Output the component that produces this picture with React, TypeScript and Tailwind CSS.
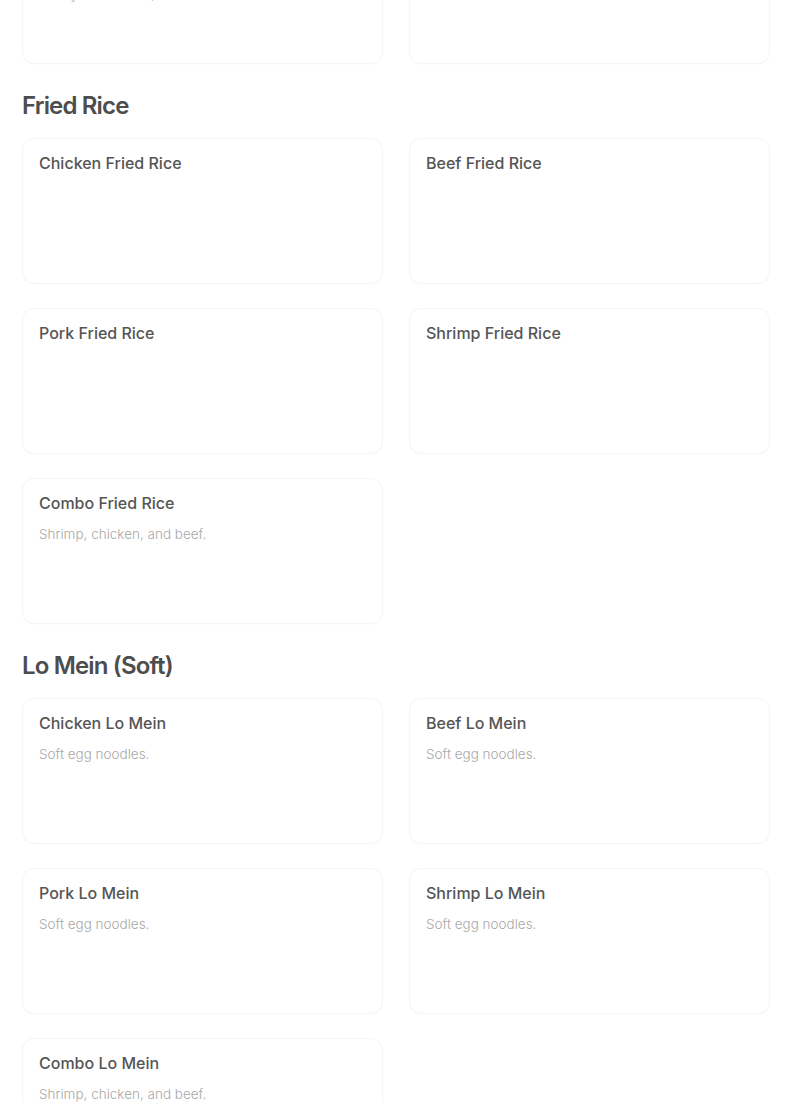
import React from 'react';

interface MenuItem {
  name: string;
  description?: string;
}

interface MenuSection {
  title?: string;
  items: MenuItem[];
}

const sections: MenuSection[] = [
  {
    items: [
      { name: 'Combo Chow Mein', description: 'Crispy pan-fried noodles tossed with cabbage, celery and onions, in brown sauce.' },
      { name: 'Vegetable Chow Mein' },
    ],
  },
  {
    title: 'Fried Rice',
    items: [
      { name: 'Chicken Fried Rice' },
      { name: 'Beef Fried Rice' },
      { name: 'Pork Fried Rice' },
      { name: 'Shrimp Fried Rice' },
      { name: 'Combo Fried Rice', description: 'Shrimp, chicken, and beef.' },
    ],
  },
  {
    title: 'Lo Mein (Soft)',
    items: [
      { name: 'Chicken Lo Mein', description: 'Soft egg noodles.' },
      { name: 'Beef Lo Mein', description: 'Soft egg noodles.' },
      { name: 'Pork Lo Mein', description: 'Soft egg noodles.' },
      { name: 'Shrimp Lo Mein', description: 'Soft egg noodles.' },
      { name: 'Combo Lo Mein', description: 'Shrimp, chicken, and beef.' },
    ],
  },
];

function ItemCard({ item }: { item: MenuItem }) {
  return (
    <div className="h-[146px] bg-white border border-[#f5f5f5] rounded-xl px-4 pt-3 shadow-[0_1px_2px_rgba(0,0,0,0.015)]">
      <h3 className="text-base leading-6 font-medium text-[#555555] font-['Inter',sans-serif]">{item.name}</h3>
      {item.description && (
        <p className="mt-[9px] text-[13.5px] leading-5 font-light text-[#a8a8a8] font-['Inter',sans-serif]">{item.description}</p>
      )}
    </div>
  );
}

export default function App() {
  return (
    <div className="min-h-screen bg-white overflow-hidden">
      <div className="w-[748px] ml-[22px] -mt-[82px] pb-10">
        {sections.map((section, i) => (
          <section key={i}>
            {section.title && (
              <h2 className="mt-[26px] mb-4 text-2xl leading-8 font-semibold tracking-[-0.035em] text-[#4d4d4d] font-['Inter',sans-serif]">
                {section.title}
              </h2>
            )}
            <div className="grid grid-cols-2 gap-x-[26px] gap-y-6">
              {section.items.map((item) => (
                <ItemCard key={item.name} item={item} />
              ))}
            </div>
          </section>
        ))}
      </div>
    </div>
  );
}
